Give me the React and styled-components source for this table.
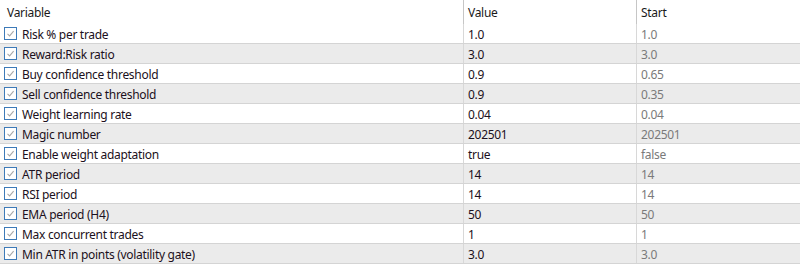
import styled, { createGlobalStyle } from "styled-components";

const rows = [
    ["Risk % per trade", "1.0", "1.0"],
    ["Reward:Risk ratio", "3.0", "3.0"],
    ["Buy confidence threshold", "0.9", "0.65"],
    ["Sell confidence threshold", "0.9", "0.35"],
    ["Weight learning rate", "0.04", "0.04"],
    ["Magic number", "202501", "202501"],
    ["Enable weight adaptation", "true", "false"],
    ["ATR period", "14", "14"],
    ["RSI period", "14", "14"],
    ["EMA period (H4)", "50", "50"],
    ["Max concurrent trades", "1", "1"],
    ["Min ATR in points (volatility gate)", "3.0", "3.0"],
];

const GlobalStyle = createGlobalStyle`
  body {
    margin: 0;
    background: #ffffff;
    font-family: "Segoe UI", "Noto Sans", "Liberation Sans", sans-serif;
    font-size: 12px;
    letter-spacing: -0.3px;
  }
`;

const Table = styled.div`
  width: 800px;
  height: 267px;
  background: #ffffff;
`;

const Row = styled.div`
  display: grid;
  grid-template-columns: 463px 173px 164px;
  height: ${p => p.$header ? 24 : 20}px;
  box-sizing: border-box;
  background: ${p => p.$shaded ? "#ebebeb" : "#ffffff"};
  border-bottom: ${p => p.$header ? "none" : "1px solid #d4d4d4"};
`;

const Cell = styled.div`
  display: flex;
  align-items: center;
  gap: 5px;
  padding-left: 4px;
  padding-top: 1px;
  color: ${p => p.$muted ? "#7a7a7a" : "#1b1020"};
  border-left: ${p => p.$first ? "none" : `1px solid ${p.$header ? "#c6c6c6" : "#d8d8d8"}`};
  white-space: nowrap;
  overflow: hidden;
`;

const HeaderLabel = styled.span`
  color: #1a1a1a;
  padding-left: ${p => p.$first ? 3 : 0}px;
`;

const Box = styled.span`
  width: 11px;
  height: 11px;
  margin-top: -1px;
  border: 1px solid #3d7ab8;
  background: #ffffff;
  display: flex;
  align-items: center;
  justify-content: center;
  flex-shrink: 0;
`;

const Check = () => (
    <Box>
        <svg width="9" height="9" viewBox="0 0 9 9">
            <path d="M1.5 4.8 L3.6 6.9 L7.6 2.2" fill="none" stroke="#a8a8a8" strokeWidth="1.1"/>
        </svg>
    </Box>
);

const App = () => (
    <Table>
        <GlobalStyle/>
        <Row $header>
            <Cell $first $header><HeaderLabel $first>Variable</HeaderLabel></Cell>
            <Cell $header><HeaderLabel>Value</HeaderLabel></Cell>
            <Cell $header><HeaderLabel>Start</HeaderLabel></Cell>
        </Row>
        {rows.map((r, i) => (
            <Row key={r[0]} $shaded={i % 2 === 1}>
                <Cell $first><Check/>{r[0]}</Cell>
                <Cell>{r[1]}</Cell>
                <Cell $muted>{r[2]}</Cell>
            </Row>
        ))}
    </Table>
);

export default App
